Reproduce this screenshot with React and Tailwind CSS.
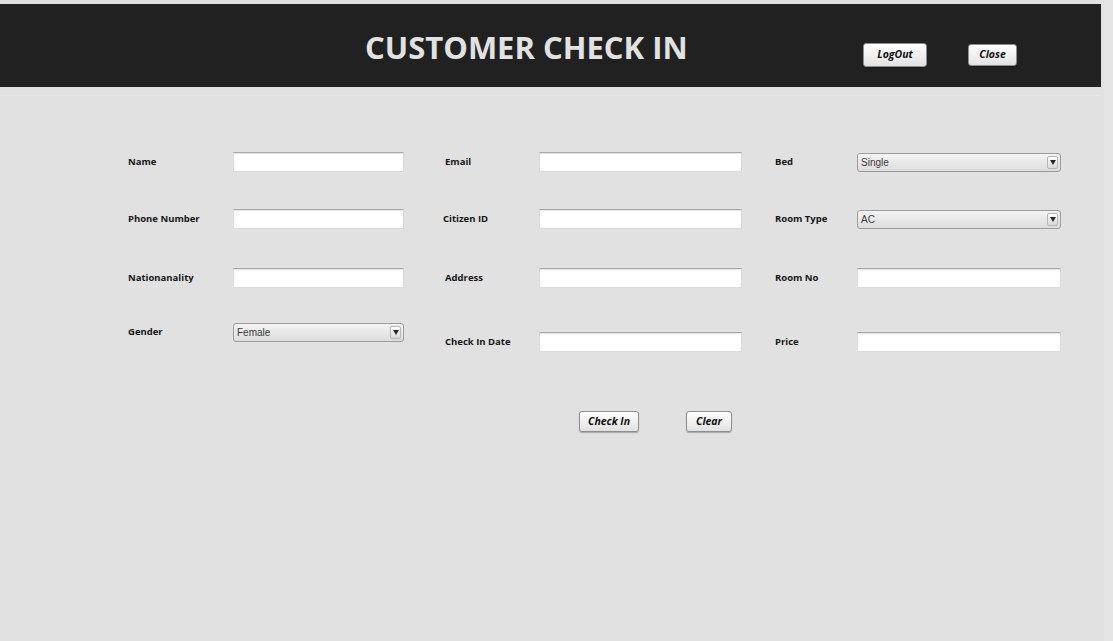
import React from "react";

const labelFont = { fontFamily: '"Open Sans", "Noto Sans", sans-serif' };

const Label = ({ text, w }) => (
    <div className={`${w} shrink-0 text-[9.5px] font-bold text-[#161616]`} style={labelFont}>
        {text}
    </div>
);

const TextBox = ({ w }) => (
    <div className={`${w} h-5 bg-white border border-[#dadada] border-t-[#a8a8a8] shadow-[inset_0_1px_1px_rgba(0,0,0,0.12)]`} />
);

const Dropdown = ({ w, value }) => (
    <div
        className={`${w} h-[19px] flex items-center rounded-[3px] border border-[#9c9c9c] bg-gradient-to-b from-[#f4f4f4] to-[#dcdcdc] pl-[3px] pr-[2px]`}
    >
        <span className="flex-1 text-[10px] text-[#3a3a3a]" style={{ fontFamily: '"Liberation Sans", Arial, sans-serif' }}>
            {value}
        </span>
        <span className="w-[11px] h-[13px] flex items-center justify-center rounded-[2px] border border-[#b5b5b5] bg-gradient-to-b from-white to-[#d8d8d8]">
            <svg width="6" height="5" viewBox="0 0 6 5">
                <path d="M0 0 L6 0 L3 5 Z" fill="#2a2a2a" />
            </svg>
        </span>
    </div>
);

const Btn = ({ children, className }) => (
    <div
        className={`flex items-center justify-center rounded-[3px] border border-[#8e8e8e] bg-gradient-to-b from-white to-[#e2e2e2] shadow-[0_1px_1px_rgba(0,0,0,0.25)] text-[10.5px] font-bold italic text-[#111] ${className}`}
        style={labelFont}
    >
        {children}
    </div>
);

const Row = ({ children, className }) => <div className={`flex items-center ${className}`}>{children}</div>;

export default function App() {
    return (
        <div className="w-full h-[641px] bg-[#e1e1e1] flex overflow-hidden">
            <div className="w-[1101px] shrink-0 flex flex-col">
                {/* header */}
                <div className="mt-[4px] h-[83px] bg-[#212121] flex items-start">
                    <div
                        className="ml-[365px] w-[326px] pt-[27px] leading-8 text-[31px] font-bold text-[#e2e2e2] whitespace-nowrap"
                        style={labelFont}
                    >
                        CUSTOMER CHECK IN
                    </div>
                    <Btn className="ml-[172px] mt-[39px] w-[64px] h-[24px] border-[#5a5a5a] shadow-[0_0_2px_rgba(255,255,255,0.5)]">LogOut</Btn>
                    <Btn className="ml-[41px] mt-[40px] w-[49px] h-[22px] border-[#5a5a5a] shadow-[0_0_2px_rgba(255,255,255,0.5)]">Close</Btn>
                </div>
                <div className="h-px mt-[8px] bg-[#e7e7e7]" />

                {/* form */}
                <div className="flex mt-[56px]">
                    <div className="ml-[128px] flex flex-col">
                        <Row>
                            <Label text="Name" w="w-[105px]" />
                            <TextBox w="w-[171px]" />
                        </Row>
                        <Row className="mt-[37px]">
                            <Label text="Phone Number" w="w-[105px]" />
                            <TextBox w="w-[171px]" />
                        </Row>
                        <Row className="mt-[39px]">
                            <Label text="Nationanality" w="w-[105px]" />
                            <TextBox w="w-[171px]" />
                        </Row>
                        <Row className="mt-[35px]">
                            <Label text="Gender" w="w-[105px]" />
                            <Dropdown w="w-[171px]" value="Female" />
                        </Row>
                    </div>

                    <div className="ml-[41px] flex flex-col">
                        <Row>
                            <Label text="Email" w="w-[94px]" />
                            <TextBox w="w-[203px]" />
                        </Row>
                        <Row className="mt-[37px]">
                            <div className="-ml-[2px]">
                                <Label text="Citizen ID" w="w-[96px]" />
                            </div>
                            <TextBox w="w-[203px]" />
                        </Row>
                        <Row className="mt-[39px]">
                            <Label text="Address" w="w-[94px]" />
                            <TextBox w="w-[203px]" />
                        </Row>
                        <Row className="mt-[44px]">
                            <Label text="Check In Date" w="w-[94px]" />
                            <TextBox w="w-[203px]" />
                        </Row>
                    </div>

                    <div className="ml-[33px] flex flex-col">
                        <Row className="h-5">
                            <Label text="Bed" w="w-[82px]" />
                            <Dropdown w="w-[204px]" value="Single" />
                        </Row>
                        <Row className="mt-[37px] h-5">
                            <Label text="Room Type" w="w-[82px]" />
                            <Dropdown w="w-[204px]" value="AC" />
                        </Row>
                        <Row className="mt-[39px]">
                            <Label text="Room No" w="w-[82px]" />
                            <TextBox w="w-[204px]" />
                        </Row>
                        <Row className="mt-[44px]">
                            <Label text="Price" w="w-[82px]" />
                            <TextBox w="w-[204px]" />
                        </Row>
                    </div>
                </div>

                {/* actions */}
                <div className="flex mt-[59px] ml-[579px]">
                    <Btn className="w-[60px] h-[21px]">Check In</Btn>
                    <Btn className="ml-[47px] w-[46px] h-[21px]">Clear</Btn>
                </div>
            </div>
            <div className="w-[3px] shrink-0" />
            <div className="flex-1 bg-[#e5e5e5]" />
        </div>
    );
}
